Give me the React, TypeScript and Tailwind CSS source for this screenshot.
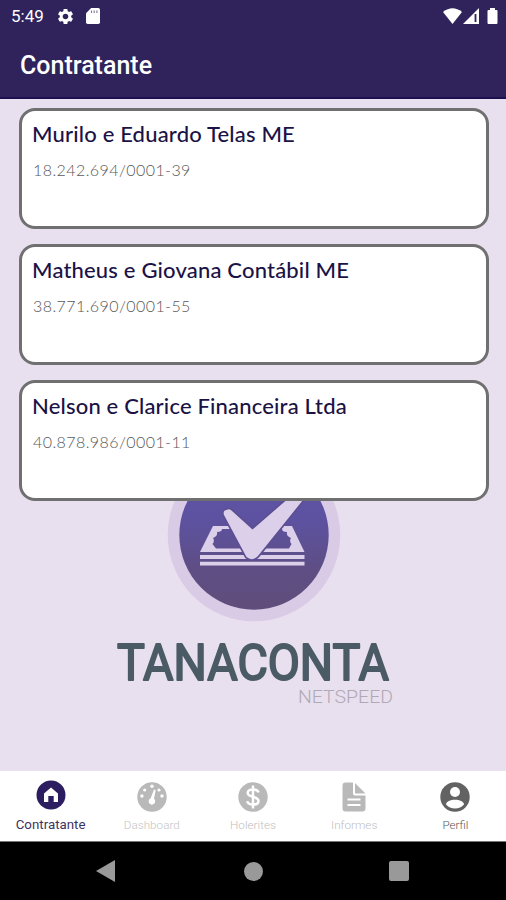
import React from "react";

const companies = [
  { name: "Murilo e Eduardo Telas ME", id: "18.242.694/0001-39" },
  { name: "Matheus e Giovana Contábil ME", id: "38.771.690/0001-55" },
  { name: "Nelson e Clarice Financeira Ltda", id: "40.878.986/0001-11" },
];

function StatusBar() {
  return (
    <div className="flex h-8 items-center justify-between pl-[11px] pr-[7px] text-white">
      <div className="flex items-center">
        <span className="w-[33px] text-[17px] leading-8">5:49</span>
        <svg className="ml-[12px] size-[19px]" viewBox="0 0 24 24" fill="currentColor">
          <path d="M19.14 12.94c.04-.3.06-.61.06-.94 0-.32-.02-.64-.07-.94l2.03-1.58c.18-.14.23-.41.12-.61l-1.92-3.32c-.12-.22-.37-.29-.59-.22l-2.39.96c-.5-.38-1.03-.7-1.62-.94l-.36-2.54c-.04-.24-.24-.41-.48-.41h-3.84c-.24 0-.43.17-.47.41l-.36 2.54c-.59.24-1.13.57-1.62.94l-2.39-.96c-.22-.08-.47 0-.59.22L2.74 8.87c-.12.21-.08.47.12.61l2.03 1.58c-.05.3-.09.63-.09.94s.02.64.07.94l-2.03 1.58c-.18.14-.23.41-.12.61l1.92 3.32c.12.22.37.29.59.22l2.39-.96c.5.38 1.03.7 1.62.94l.36 2.54c.05.24.24.41.48.41h3.84c.24 0 .44-.17.47-.41l.36-2.54c.59-.24 1.13-.56 1.62-.94l2.39.96c.22.08.47 0 .59-.22l1.92-3.32c.12-.22.07-.47-.12-.61l-2.01-1.58zM12 15.6c-1.98 0-3.6-1.62-3.6-3.6s1.62-3.6 3.6-3.6 3.6 1.62 3.6 3.6-1.62 3.6-3.6 3.6z" />
        </svg>
        <svg className="ml-[11px] h-4 w-[14px]" viewBox="0 0 14 16">
          <path d="M5.2 0H12.3Q14 0 14 1.7V14.3Q14 16 12.3 16H1.7Q0 16 0 14.3V5.2Z" fill="#fff" />
          <path d="M5.5 2.500v2.500M8.200 2.500v2.500M10.900 2.500v2.500" stroke="#8a839f" strokeWidth="1.200" />
        </svg>
      </div>
      <svg className="h-[18px] w-[56px]" viewBox="443 6 56 18" fill="#fff">
        <path d="M443 11Q452.500 3.500 462 11L452.500 23Z" />
        <path d="M479 7V23H463Z" />
        <path d="M475.500 13V21" stroke="#30225a" strokeWidth="1.800" />
        <path d="M490 7h5v2h1.500q1 0 1 1v12q0 1-1 1h-8q-1 0-1-1V10q0-1 1-1H490Z" />
      </svg>
    </div>
  );
}

function Logo() {
  return (
    <svg className="absolute left-[110px] top-[341px] h-[275px] w-[290px] overflow-visible" viewBox="110 440 290 275">
      <defs>
        <linearGradient id="disc" x1="0" y1="0" x2="0" y2="1">
          <stop offset="0" stopColor="#6152ac" />
          <stop offset="0.4" stopColor="#5d52a0" />
          <stop offset="0.72" stopColor="#5e4e85" />
          <stop offset="1" stopColor="#604d7a" />
        </linearGradient>
      </defs>
      <circle cx="254" cy="535" r="86.300" fill="#d9cbe6" />
      <circle cx="254" cy="535" r="74.700" fill="url(#disc)" />
      <path
        fill="#dccfe9"
        d="M213 526H230V529H222Q222 532 217 532Q218 536 213 538Q215 541 212.500 544L216 548.500H289L291.500 544Q289 541 291 538Q286 536 287 532Q282 532 282 529V526H292L304.500 552H200Z"
      />
      <path d="M200 555h104.500v4H200ZM200 561.700h104.500v3.800H200Z" fill="#dccfe9" />
      <path
        d="M224 515Q222.500 510.500 227 509.700Q230 508.500 232 511L252.500 529.500L290 497L307 495L257.500 556.500Q252 561.500 246.500 557Z"
        fill="#dccfe9"
        stroke="#5d4f93"
        strokeWidth="3.400"
        paintOrder="stroke"
      />
      <text
        x="117"
        y="680.300"
        textLength="272"
        lengthAdjust="spacingAndGlyphs"
        fontFamily="Roboto, sans-serif"
        fontSize="50.500"
        fontWeight="400"
        fill="#4b5b66"
        stroke="#4b5b66"
        strokeWidth="2"
        strokeLinejoin="round"
      >
        TANACONTA
      </text>
      <text x="298" y="702.800" textLength="95" lengthAdjust="spacingAndGlyphs" fontFamily="Roboto, sans-serif" fontSize="17.500" fontWeight="300" fill="#b0a8b4">
        NETSPEED
      </text>
    </svg>
  );
}

function HomeIcon() {
  return (
    <svg className="size-[30px]" viewBox="0 0 30 30">
      <circle cx="15" cy="15" r="14.500" fill="#2b1d60" />
      <path d="M15 7.500L22 13.500V22H17.700V16H12.300V22H8V13.500Z" fill="#fff" />
    </svg>
  );
}

function GaugeIcon() {
  return (
    <svg className="size-[30px]" viewBox="0 0 30 30">
      <circle cx="15" cy="15" r="14.700" fill="#b9b9b9" />
      <g fill="#fff">
        <circle cx="4.900" cy="14" r="1.700" />
        <circle cx="7.700" cy="8" r="1.600" />
        <circle cx="15" cy="4.200" r="1.700" />
        <circle cx="22" cy="8" r="1.600" />
        <circle cx="25" cy="14" r="1.700" />
        <path d="M17 7.500L18.700 8L17 16.800A3.300 3.300 0 1 1 13.700 16.300Z" />
      </g>
    </svg>
  );
}

function DollarIcon() {
  return (
    <svg className="size-[30px]" viewBox="0 0 30 30" fill="none">
      <circle cx="15" cy="15" r="14.700" fill="#b9b9b9" />
      <path
        d="M15 3.500V26.500M20.500 10.500C20 8.500 18 7.500 15 7.500C12 7.500 9.700 8.700 9.700 11C9.700 16 20.500 13.500 20.500 19C20.500 21.300 18.200 22.600 15 22.600C12 22.600 9.600 21.500 9.300 19.200"
        stroke="#fff"
        strokeWidth="2.500"
      />
    </svg>
  );
}

function DocumentIcon() {
  return (
    <svg className="size-[30px]" viewBox="0 0 30 30">
      <path
        d="M6.500 .5H14V11.500Q14 13.500 16 13.500H26.500V26.500Q26.500 29.500 23.500 29.500H6.500Q3.500 29.500 3.500 26.500V3.500Q3.500 .5 6.500 .5ZM16 1L26.500 11.500H16Z"
        fill="#b9b9b9"
      />
      <path d="M8.500 17.500H21.500M8.500 23H21.500" stroke="#fff" strokeWidth="2.200" />
    </svg>
  );
}

function ProfileIcon() {
  return (
    <svg className="size-[30px]" viewBox="0 0 30 30">
      <circle cx="15" cy="15" r="14.700" fill="#626262" />
      <circle cx="15" cy="10" r="5" fill="#fff" />
      <path d="M6 22.500C6 16 24 16 24 22.500Q20.500 26.500 15 26.500T6 22.500Z" fill="#fff" />
    </svg>
  );
}

const tabs = [
  { label: "Contratante", icon: <HomeIcon />, box: "pt-[9px]", text: "mt-[7px] text-[13.3px] text-[#3d335c]" },
  { label: "Dashboard", icon: <GaugeIcon />, box: "pt-[11px]", text: "mt-[5px] text-[11.7px] text-[#c4c4c4] font-light" },
  { label: "Holerites", icon: <DollarIcon />, box: "pt-[11px]", text: "mt-[5px] text-[11.7px] text-[#c0c0c0] font-light" },
  { label: "Informes", icon: <DocumentIcon />, box: "pt-[11px]", text: "mt-[5px] text-[11.7px] text-[#c0c0c0] font-light" },
  { label: "Perfil", icon: <ProfileIcon />, box: "pt-[11px]", text: "mt-[5px] text-[11.7px] text-[#585858] font-light" },
];

export default function App() {
  return (
    <div className="flex h-[900px] w-[506px] flex-col overflow-hidden bg-[#e8e0ee] font-['Roboto',sans-serif]">
      <header className="h-[99px] shrink-0 border-b-2 border-[#1c104e] bg-[#30225a]">
        <StatusBar />
        <h1 className="pl-5 text-[25px] font-medium leading-[68px] text-white">Contratante</h1>
      </header>
      <main className="relative flex h-[672px] shrink-0 flex-col gap-[15px] px-[19px] pt-[9px]">
        <Logo />
        {companies.map((c) => (
          <section
            key={c.id}
            className="relative h-[121px] w-[470px] rounded-[16px] border-[3px] border-[#707070] bg-white pl-[10px] pt-[9px] font-['Lato',sans-serif]"
          >
            <h2 className="whitespace-nowrap text-[22px] font-medium leading-[27px] tracking-[0.18px] text-[#1b1246]">{c.name}</h2>
            <p className="mt-[9px] pl-px text-[16px] font-light leading-[28px] tracking-[0.42px] text-[#585858]">{c.id}</p>
          </section>
        ))}
      </main>
      <nav className="grid h-[71px] shrink-0 grid-cols-5 border-b border-[#777] bg-white">
        {tabs.map((t) => (
          <div key={t.label} className={`flex flex-col items-center ${t.box}`}>
            {t.icon}
            <span className={`leading-4 ${t.text}`}>{t.label}</span>
          </div>
        ))}
      </nav>
      <footer className="flex h-[58px] shrink-0 items-center bg-black">
        <svg className="ml-[96px] h-[22px] w-[19px]" viewBox="0 0 19 22">
          <path d="M0 11L19 0V22Z" fill="#999" />
        </svg>
        <div className="ml-[129px] size-[19px] rounded-full bg-[#999]" />
        <div className="ml-[126px] size-[20px] rounded-[2px] bg-[#999]" />
      </footer>
    </div>
  );
}
